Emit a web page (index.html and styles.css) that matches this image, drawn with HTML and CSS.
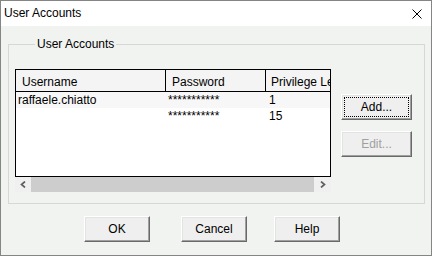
FILE: index.html
```html
<!DOCTYPE html>
<html>
<head>
<meta charset="utf-8">
<link rel="stylesheet" href="styles.css">
</head>
<body>
<div class="window">
  <div class="titlebar">
    <span class="title">User Accounts</span>
    <svg class="close" width="10" height="10" viewBox="0 0 10 10"><path d="M0.5 0.5 L9.5 9.5 M9.5 0.5 L0.5 9.5" stroke="#000" stroke-width="1" fill="none"/></svg>
  </div>
  <div class="content">
    <fieldset class="group">
      <legend class="group-label">User Accounts</legend>
      <div class="group-body">
        <div class="list-col">
          <div class="listview">
            <div class="lv-header">
              <div class="hcell c1">Username</div>
              <div class="hcell c2">Password</div>
              <div class="hcell c3">Privilege Level</div>
            </div>
            <div class="lv-row selected">
              <div class="cell c1 t1">raffaele.chiatto</div>
              <div class="cell c2 t2">***********</div>
              <div class="cell c3 t3">1</div>
            </div>
            <div class="lv-row">
              <div class="cell c1 t1"></div>
              <div class="cell c2 t2">***********</div>
              <div class="cell c3 t3">15</div>
            </div>
          </div>
          <div class="hscroll">
            <div class="sb-btn left"><svg width="6" height="7" viewBox="0 0 6 7"><path d="M5 0.5 L1.5 3.5 L5 6.5" stroke="#606060" stroke-width="1.7" fill="none"/></svg></div>
            <div class="sb-track"></div>
            <div class="sb-btn right"><svg width="6" height="7" viewBox="0 0 6 7"><path d="M1 0.5 L4.5 3.5 L1 6.5" stroke="#606060" stroke-width="1.7" fill="none"/></svg></div>
          </div>
        </div>
        <div class="side-buttons">
          <div class="btn side focused">Add...</div>
          <div class="btn side disabled">Edit...</div>
        </div>
      </div>
    </fieldset>
    <div class="bottom-buttons">
      <div class="btn bottom ok">OK</div>
      <div class="btn bottom cancel">Cancel</div>
      <div class="btn bottom help">Help</div>
    </div>
  </div>
</div>
</body>
</html>
```
FILE: styles.css
```css
html, body {
  margin: 0;
  padding: 0;
}
body {
  font-family: "Liberation Sans", Arial, sans-serif;
  font-size: 12px;
  color: #000;
  background: #f0f3f0;
}
.window {
  width: 432px;
  height: 256px;
  box-sizing: border-box;
  border: 1px solid #858585;
  background: #f0f3f0;
  display: flex;
  flex-direction: column;
}
.titlebar {
  height: 25px;
  flex: none;
  background: #fff;
  display: flex;
  align-items: center;
  justify-content: space-between;
  padding: 0 9px 0 3px;
  line-height: 25px;
}
.title {
  font-size: 12px;
}
.close {
  display: block;
}
.content {
  flex: 1;
  display: flex;
  flex-direction: column;
}
.group {
  margin: 11px 6px 0 7px;
  padding: 18px 0 0 6px;
  border: 1px solid #d5d8d5;
  height: 167px;
  box-sizing: border-box;
  min-width: 0;
}
.group-label {
  margin-left: 20px;
  padding: 0 2px;
  height: 14px;
  line-height: 14px;
  font-size: 12px;
}
.group-body {
  display: flex;
}
.list-col {
  width: 316px;
  display: flex;
  flex-direction: column;
}
.listview {
  height: 108px;
  box-sizing: border-box;
  border: 1px solid #000;
  background: #fff;
  overflow: hidden;
}
.lv-header {
  display: flex;
  height: 22px;
  box-sizing: border-box;
  border-bottom: 1px solid #000;
  background: #f4f4f4;
}
.hcell {
  height: 21px;
  box-sizing: border-box;
  padding-top: 4px;
  line-height: 17px;
  white-space: nowrap;
  overflow: hidden;
}
.hcell.c1 { width: 150px; padding-left: 6px; border-right: 1px solid #000; }
.hcell.c2 { width: 100px; padding-left: 6px; border-right: 1px solid #000; }
.hcell.c3 { flex: 1; padding-left: 5px; }
.lv-row {
  display: flex;
  height: 16px;
  line-height: 16px;
}
.lv-row.selected {
  background: #f7f7f7;
}
.cell {
  white-space: nowrap;
  overflow: hidden;
}
.cell.c1 { width: 150px; padding-left: 2px; box-sizing: border-box; }
.cell.c2 { width: 100px; padding-left: 2px; box-sizing: border-box; }
.cell.c3 { flex: 1; padding-left: 3px; }
.hscroll {
  height: 15px;
  display: flex;
}
.sb-btn {
  background: #f0f0f0;
  display: flex;
  align-items: center;
  justify-content: center;
}
.sb-btn.left { width: 16px; }
.sb-btn.right { width: 17px; }
.sb-btn svg { display: block; }
.sb-track {
  flex: 1;
  background: #cdcdcd;
}
.side-buttons {
  margin-left: 10px;
  margin-top: 25px;
  display: flex;
  flex-direction: column;
  gap: 11px;
}
.btn {
  box-sizing: border-box;
  background: #efefef;
  border-top: 1px solid #fff;
  border-left: 1px solid #fff;
  border-right: 1px solid #696969;
  border-bottom: 1px solid #696969;
  box-shadow: inset -1px -1px 0 #a0a0a0, inset 1px 1px 0 #e3e3e3;
  display: flex;
  align-items: center;
  justify-content: center;
  font-size: 12px;
}
.btn.side {
  width: 71px;
  height: 26px;
}
.btn.focused {
  outline: 1px dotted #000;
  outline-offset: -4px;
}
.btn.disabled {
  color: #a0a0a0;
}
.bottom-buttons {
  display: flex;
  margin-top: 12px;
}
.btn.bottom {
  width: 66px;
  height: 26px;
}
.btn.ok { margin-left: 83px; }
.btn.cancel { margin-left: 31px; }
.btn.help { margin-left: 27px; }
```
